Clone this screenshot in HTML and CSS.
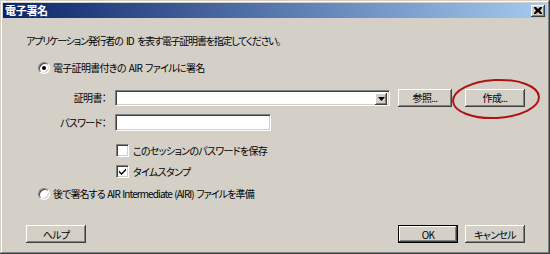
FILE: index.html
```html
<!DOCTYPE html>
<html lang="ja">
<head>
<meta charset="utf-8">
<link rel="stylesheet" href="styles.css">
</head>
<body>
<div class="window">
  <div class="titlebar">
    <span class="title">電子署名</span>
    <span class="close"><svg width="8" height="7" viewBox="0 0 8 7"><path d="M0 0h2l2 2 2-2h2v1L6 3.5 8 6v1H6L4 5 2 7H0V6l2-2.5L0 1z" fill="#000"/></svg></span>
  </div>
  <div class="content">
    <p class="intro">アプリケーション発行者の ID を表す電子証明書を指定してください。</p>
    <div class="radio-row r1"><span class="radio checked"></span><span>電子証明書付きの AIR ファイルに署名</span></div>
    <div class="form-row cert">
      <span class="lbl">証明書：</span>
      <div class="combo"><span class="combo-btn"><svg width="7" height="4" viewBox="0 0 7 4"><path d="M0 0h7L3.5 4z" fill="#000"/></svg></span></div>
      <span class="btn b-browse">参照...</span>
      <span class="btn b-create">作成...</span>
    </div>
    <div class="form-row pw">
      <span class="lbl">パスワード：</span>
      <div class="field"></div>
    </div>
    <div class="check-row c1"><span class="check"></span><span>このセッションのパスワードを保存</span></div>
    <div class="check-row c2"><span class="check"><svg width="7" height="7" viewBox="0 0 7 7"><path d="M0 2.5l2.5 2.5L7 0.5V2.5L2.5 7 0 4.5z" fill="#000"/></svg></span><span>タイムスタンプ</span></div>
    <div class="radio-row r2"><span class="radio"></span><span>後で署名する AIR Intermediate (AIRI) ファイルを準備</span></div>
    <div class="footer">
      <span class="btn">ヘルプ</span>
      <div class="footer-right">
        <span class="btn default">OK</span>
        <span class="btn">キャンセル</span>
      </div>
    </div>
  </div>
  <svg class="highlight" width="92" height="44" viewBox="0 0 92 44"><ellipse cx="46" cy="22" rx="43" ry="19" fill="none" stroke="#b01212" stroke-width="2" transform="rotate(-3 46 22)"/></svg>
</div>
</body>
</html>
```

FILE: styles.css
```css
html, body {
  margin: 0;
  padding: 0;
  background: #d4d0c8;
}
.window {
  position: relative;
  width: 550px;
  height: 254px;
  box-sizing: border-box;
  background: #d4d0c8;
  box-shadow: inset -1px -1px #404040, inset 1px 1px #d4d0c8, inset -2px -2px #808080, inset 2px 2px #ffffff;
  padding: 3px 3px 0 3px;
  font-family: "Noto Sans CJK JP", "Liberation Sans", sans-serif;
  font-size: 10px;
  letter-spacing: -0.7px;
  word-spacing: 1.5px;
  font-feature-settings: "palt";
  color: #000;
}
.titlebar {
  height: 15px;
  display: flex;
  align-items: center;
  justify-content: space-between;
  padding: 0 2px 0 2px;
  background: linear-gradient(to right, #0a246a, #a6caf0);
}
.title {
  color: #fff;
  font-weight: bold;
  font-size: 11px;
  letter-spacing: -0.3px;
  line-height: 15px;
}
.close {
  width: 14px;
  height: 12px;
  box-sizing: border-box;
  display: flex;
  align-items: center;
  justify-content: center;
  background: #d4d0c8;
  box-shadow: inset -1px -1px #404040, inset 1px 1px #ffffff, inset -2px -2px #808080;
}
.content {
  display: flex;
  flex-direction: column;
}
.intro {
  margin: 16px 0 0 23px;
  height: 14px;
  line-height: 14px;
  letter-spacing: -1.2px;
  word-spacing: 2.5px;
}
.radio-row {
  display: flex;
  align-items: center;
  gap: 3px;
  height: 14px;
  line-height: 14px;
  padding-left: 35px;
}
.r1 { margin-top: 13px; }
.r2 {
  margin-top: 9px;
  letter-spacing: -0.9px;
  word-spacing: 1px;
}
.radio {
  width: 12px;
  height: 12px;
  box-sizing: border-box;
  border-radius: 50%;
  background: #fff;
  border: 1px solid;
  border-color: #808080 #ffffff #ffffff #808080;
  box-shadow: inset 1px 1px #404040, inset -1px -1px #d4d0c8;
  display: flex;
  align-items: center;
  justify-content: center;
}
.radio.checked::after {
  content: "";
  width: 4px;
  height: 4px;
  border-radius: 50%;
  background: #000;
}
.form-row {
  display: flex;
  align-items: center;
  height: 17px;
}
.cert { margin-top: 14px; }
.pw { margin-top: 8px; }
.lbl {
  width: 103px;
  text-align: right;
  margin-right: 9px;
}
.combo, .field {
  height: 17px;
  box-sizing: border-box;
  background: #fff;
  border: 1px solid;
  border-color: #808080 #ffffff #ffffff #808080;
  box-shadow: inset 1px 1px #404040, inset -1px -1px #d4d0c8;
}
.combo {
  width: 275px;
  height: 16px;
  display: flex;
  justify-content: flex-end;
  padding: 2px;
}
.combo-btn {
  width: 12px;
  height: 12px;
  box-sizing: border-box;
  background: #d4d0c8;
  box-shadow: inset -1px -1px #404040, inset 1px 1px #ffffff, inset -2px -2px #808080;
  display: flex;
  align-items: center;
  justify-content: center;
}
.field {
  width: 156px;
}
.btn {
  height: 18px;
  width: 60px;
  box-sizing: border-box;
  display: inline-flex;
  align-items: center;
  justify-content: center;
  background: #d4d0c8;
  box-shadow: inset -1px -1px #404040, inset 1px 1px #ffffff, inset -2px -2px #808080, inset 2px 2px #d4d0c8;
}
.b-browse {
  width: 54px;
  margin-left: 8px;
}
.b-create {
  margin-left: 13px;
}
.btn.default {
  border: 1px solid #000;
  box-shadow: inset -1px -1px #404040, inset 1px 1px #ffffff, inset -2px -2px #808080;
}
.check-row {
  display: flex;
  align-items: center;
  gap: 4px;
  height: 13px;
  padding-left: 113px;
}
.c1 { margin-top: 13px; }
.c2 { margin-top: 8px; }
.check {
  width: 13px;
  height: 13px;
  box-sizing: border-box;
  background: #fff;
  border: 1px solid;
  border-color: #808080 #ffffff #ffffff #808080;
  box-shadow: inset 1px 1px #404040, inset -1px -1px #d4d0c8;
  display: flex;
  align-items: center;
  justify-content: center;
}
.footer {
  display: flex;
  justify-content: space-between;
  margin-top: 24px;
  padding: 0 22px 0 23px;
}
.footer-right {
  display: flex;
  gap: 7px;
}
.highlight {
  position: absolute;
  left: 450px;
  top: 77px;
}
```
